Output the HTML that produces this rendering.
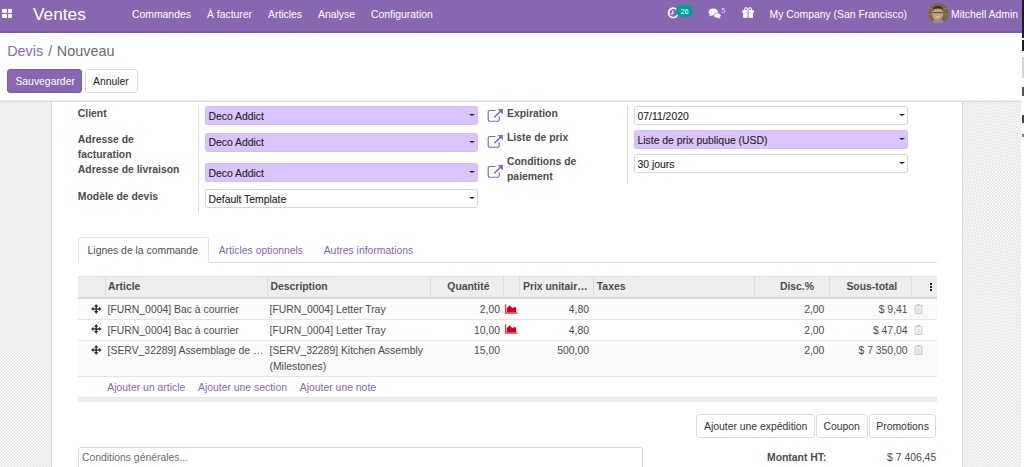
<!DOCTYPE html>
<html><head><meta charset="utf-8">
<style>
*{box-sizing:border-box;margin:0;padding:0}
html,body{width:1024px;height:467px;overflow:hidden;background:#fff;font-family:"Liberation Sans",sans-serif;font-size:10.4px;color:#4c4c4c}
.a{position:absolute;white-space:nowrap;line-height:12px}
.nav{position:absolute;left:0;top:0;width:1021.6px;height:33px;background:#8667b0;border-bottom:2px solid #7d5da9;z-index:2}
.nav .a{color:#fff}
.strip{position:absolute;left:1021px;top:0;width:3px;height:467px;background:#fff}
.cp{position:absolute;left:0;top:33px;width:1021px;height:69px;background:#fff;border-bottom:1px solid #dcdcdc;box-shadow:inset 0 -1px 0 #ececec}
.bg{position:absolute;left:0;top:102px;width:1021px;height:365px;background-color:#fafafa;background-image:radial-gradient(circle,#e4e4e4 0.6px,rgba(228,228,228,0) 1.25px),radial-gradient(circle,#e4e4e4 0.6px,rgba(228,228,228,0) 1.25px);background-size:3.2px 3.2px;background-position:0 0,1.6px 1.6px}
.sheet{position:absolute;left:51px;top:102px;width:912px;height:365px;background:#fff;border-left:1px solid #d8d5e6;border-right:1px solid #d8d5e6}
.lbl{font-weight:bold;color:#4c4c4c}
.fld{position:absolute;height:19px;border:1px solid #d6d6d6;border-radius:2.5px;background:#fff;color:#4c4c4c}
.fld.req{background:#dbc4fb;border-color:#d2bdf0}
.fld span{position:absolute;left:2.5px;top:3.6px;line-height:12px;color:#222;-webkit-text-stroke:0.1px #222}
.caret{position:absolute;right:2px;top:7px;width:0;height:0;border-left:3.1px solid transparent;border-right:3.1px solid transparent;border-top:2.8px solid #222}
.sep{position:absolute;width:1px;background:#dedede}
.btn{position:absolute;border:1px solid #dcdcdc;border-radius:3px;background:#fff;color:#333}
.btn span{position:absolute;line-height:12px;white-space:nowrap}
.purple{color:#8a63b5}

.tabbar{position:absolute;left:78px;top:262px;width:859px;height:1px;background:#dee2e6}
.tab{position:absolute;left:77.7px;top:236.8px;width:131px;height:26px;background:#fff;border:1px solid #dee2e6;border-bottom:none;border-radius:3px 3px 0 0}
.th{position:absolute;top:276px;height:23px;background:#eeeeee;border-top:1px solid #e2e2e2;border-bottom:2px solid #d8d8df}
.th i{position:absolute;top:0;width:1px;height:21px;background:#dcdcdc}
.hd{position:absolute;top:281.4px;font-weight:bold;line-height:12px;white-space:nowrap;color:#4c4c4c}
.row{position:absolute;left:78px;width:859px;border-bottom:1px solid #e4e4e8}
.c{position:absolute;line-height:12px;white-space:nowrap;color:#4c4c4c}
.r{text-align:right}
</style></head><body>

<!-- NAVBAR -->
<div class="nav">
  <div class="a" style="left:2px;top:9px;width:11px;height:9px">
    <div style="position:absolute;left:0;top:0.2px;width:4.5px;height:4.2px;background:#fff;border-radius:1px"></div>
    <div style="position:absolute;left:5.7px;top:0.2px;width:4.5px;height:4.2px;background:#fff;border-radius:1px"></div>
    <div style="position:absolute;left:0;top:5px;width:4.5px;height:4.2px;background:#fff;border-radius:1px"></div>
    <div style="position:absolute;left:5.7px;top:5px;width:4.5px;height:4.2px;background:#fff;border-radius:1px"></div>
  </div>
  <div class="a" style="left:33px;top:4px;font-size:17.3px;line-height:20px">Ventes</div>
  <div class="a" style="left:132px;top:9px">Commandes</div>
  <div class="a" style="left:207px;top:9px">À facturer</div>
  <div class="a" style="left:268px;top:9px">Articles</div>
  <div class="a" style="left:318px;top:9px">Analyse</div>
  <div class="a" style="left:371px;top:9px">Configuration</div>
  <!-- clock -->
  <svg class="a" style="left:667px;top:7px" width="13" height="13" viewBox="0 0 13 13"><circle cx="6.3" cy="5.9" r="4.7" fill="none" stroke="#fff" stroke-width="1.8"/><path d="M5.8 3.3V6.6H3.8" fill="none" stroke="#fff" stroke-width="1.1"/></svg>
  <div class="a" style="left:675.7px;top:5.2px;width:17.2px;height:11.8px;background:#00a09d;border-radius:6px;font-size:7.2px;line-height:13.5px;text-align:center;padding-left:0.5px;overflow:hidden">26</div>
  <!-- chat -->
  <svg class="a" style="left:707.5px;top:8px" width="14" height="11" viewBox="0 0 14 11"><ellipse cx="5.3" cy="3.9" rx="4.9" ry="3.5" fill="#fff"/><path d="M2 6L1.2 8.6L5 7z" fill="#fff"/><ellipse cx="9.3" cy="7.4" rx="3.6" ry="2.5" stroke="#8667b0" stroke-width="0.6" fill="#fff"/><path d="M11.5 9L12.8 10.6L9.5 9.8z" fill="#fff"/></svg>
  <div class="a" style="left:721.3px;top:6.4px;font-size:7.5px;line-height:9px;color:#ddd3ec">5</div>
  <!-- gift -->
  <svg class="a" style="left:742px;top:7px" width="13" height="12" viewBox="0 0 13 12"><rect x="0.4" y="3" width="11.4" height="3" fill="#fff"/><rect x="1.2" y="6" width="9.8" height="4.8" fill="#fff"/><circle cx="4.1" cy="2.2" r="1.4" fill="none" stroke="#fff" stroke-width="1.1"/><circle cx="8.1" cy="2.2" r="1.4" fill="none" stroke="#fff" stroke-width="1.1"/><rect x="5.6" y="3" width="1" height="8" fill="#8667b0"/></svg>
  <div class="a" style="left:769.5px;top:9px">My Company (San Francisco)</div>
  <svg class="a" style="left:928px;top:3px" width="21" height="21" viewBox="0 0 21 21"><defs><clipPath id="av"><circle cx="10.4" cy="10.4" r="10.3"/></clipPath></defs><g clip-path="url(#av)"><rect width="21" height="21" fill="#76693f"/><rect x="0" y="5" width="21" height="1" fill="#8c7c4c"/><rect x="0" y="11" width="21" height="1" fill="#8c7c4c"/><path d="M3 21 Q4 16 10 16.5 Q16 16 18 21z" fill="#8c9090"/><ellipse cx="9.6" cy="10.6" rx="5.6" ry="6.8" fill="#c49a80"/><path d="M4.6 8.5 Q4.5 3 10 3 Q15.5 3 15.2 8 L14 6.2 Q10 4.8 6 6.3z" fill="#3b2e26"/><path d="M4.6 9.6H14.8" stroke="#4a3f3a" stroke-width="0.9"/><ellipse cx="9.6" cy="14" rx="2" ry="0.8" fill="#e6cfc2"/></g></svg>
  <div class="a" style="left:951px;top:9px">Mitchell Admin</div>
</div>
<div class="a" style="left:1021.6px;top:32px;width:2.4px;height:435px;background:#fff"></div>
<div class="a" style="left:1019.5px;top:33px;width:1px;height:434px;background:#f0f0f0"></div>
<div class="a" style="left:1021.6px;top:0;width:2.4px;height:37.5px;background:#1c1c1c"></div>
<div class="a" style="left:1021.6px;top:39.5px;width:2.4px;height:11.5px;background:#1c1c1c"></div>
<div class="a" style="left:1021.6px;top:57px;width:2.4px;height:20.5px;background:#d4d4dc"></div>
<div class="a" style="left:1021.6px;top:87px;width:2.4px;height:9px;background:#555"></div>
<div class="a" style="left:1021.6px;top:115px;width:2.4px;height:7.5px;background:#444"></div>
<div class="a" style="left:1021.6px;top:133.7px;width:2.4px;height:3.8px;background:#8667b0"></div>
<div class="a" style="left:1020px;top:174px;width:1px;height:167px;background:#c8c8c8"></div>

<!-- CONTROL PANEL -->
<div class="cp"></div>
<div class="a purple" style="left:7.2px;top:42.5px;font-size:14.4px;line-height:16px">Devis</div><div class="a" style="left:48.3px;top:42.5px;font-size:14.4px;line-height:16px;color:#6b6b6b">/</div><div class="a" style="left:56.8px;top:42.5px;font-size:14.4px;line-height:16px;color:#6b6b6b">Nouveau</div>
<div class="btn" style="left:7px;top:69px;width:75px;height:24px;background:#8667b0;border-color:#7b5ca6"><span style="left:7.4px;top:6px;color:#fff">Sauvegarder</span></div>
<div class="btn" style="left:85px;top:69px;width:53px;height:24px"><span style="left:7px;top:6px;color:#222">Annuler</span></div>

<!-- BACKGROUND + SHEET -->
<div class="bg"></div>
<div class="sheet"></div>


<!-- FORM FIELDS -->
<div class="a lbl" style="left:77.8px;top:108.4px">Client</div>
<div class="a lbl" style="left:77.8px;top:131.5px;line-height:15px;white-space:normal;width:110px">Adresse de<br>facturation</div>
<div class="a lbl" style="left:77.8px;top:163.9px">Adresse de livraison</div>
<div class="a lbl" style="left:77.8px;top:190.6px">Modèle de devis</div>
<div class="sep" style="left:198px;top:105.5px;height:107px"></div>
<div class="fld req" style="left:205px;top:106px;width:273px"><span>Deco Addict</span><i class="caret"></i></div>
<div class="fld req" style="left:205px;top:132.5px;width:273px"><span>Deco Addict</span><i class="caret"></i></div>
<div class="fld req" style="left:205px;top:163px;width:273px"><span>Deco Addict</span><i class="caret"></i></div>
<div class="fld" style="left:205px;top:189.3px;width:273px"><span>Default Template</span><i class="caret"></i></div>
<svg class="a ext" style="left:487px;top:108.0px" width="17" height="15" viewBox="0 0 17 15"><path d="M8.6 2.5H2.8Q1.2 2.5 1.2 4.1V11.6Q1.2 13.2 2.8 13.2H10.6Q12.2 13.2 12.2 11.6V8.2" fill="none" stroke="#8a63b5" stroke-width="1.15"/><path d="M7.4 9.2L14.2 2.4" stroke="#8a63b5" stroke-width="1.5"/><path d="M10.6 0.9H15.9V6.2z" fill="#8a63b5"/></svg>
<svg class="a ext" style="left:487px;top:133.5px" width="17" height="15" viewBox="0 0 17 15"><path d="M8.6 2.5H2.8Q1.2 2.5 1.2 4.1V11.6Q1.2 13.2 2.8 13.2H10.6Q12.2 13.2 12.2 11.6V8.2" fill="none" stroke="#8a63b5" stroke-width="1.15"/><path d="M7.4 9.2L14.2 2.4" stroke="#8a63b5" stroke-width="1.5"/><path d="M10.6 0.9H15.9V6.2z" fill="#8a63b5"/></svg>
<svg class="a ext" style="left:487px;top:163.5px" width="17" height="15" viewBox="0 0 17 15"><path d="M8.6 2.5H2.8Q1.2 2.5 1.2 4.1V11.6Q1.2 13.2 2.8 13.2H10.6Q12.2 13.2 12.2 11.6V8.2" fill="none" stroke="#8a63b5" stroke-width="1.15"/><path d="M7.4 9.2L14.2 2.4" stroke="#8a63b5" stroke-width="1.5"/><path d="M10.6 0.9H15.9V6.2z" fill="#8a63b5"/></svg>
<div class="a lbl" style="left:507px;top:108.4px">Expiration</div>
<div class="a lbl" style="left:507px;top:132.4px">Liste de prix</div>
<div class="a lbl" style="left:507px;top:153.9px;line-height:15px">Conditions de<br>paiement</div>
<div class="sep" style="left:627px;top:105.5px;height:78px"></div>
<div class="fld" style="left:634px;top:106px;width:274px"><span>07/11/2020</span><i class="caret"></i></div>
<div class="fld req" style="left:634px;top:130px;width:274px"><span>Liste de prix publique (USD)</span><i class="caret"></i></div>
<div class="fld" style="left:634px;top:154.3px;width:274px"><span>30 jours</span><i class="caret"></i></div>


<!-- TABS -->
<div class="tabbar"></div>
<div class="tab"></div>
<div class="a" style="left:87.6px;top:245px;color:#4c4c4c">Lignes de la commande</div>
<div class="a purple" style="left:218.7px;top:245px">Articles optionnels</div>
<div class="a purple" style="left:323.7px;top:245px">Autres informations</div>

<!-- TABLE -->
<div class="th" style="left:78px;width:859px">
 <i style="left:27px"></i><i style="left:189px"></i><i style="left:352px"></i><i style="left:425px"></i><i style="left:441px"></i><i style="left:515px"></i><i style="left:676px"></i><i style="left:751px"></i><i style="left:833px"></i>
</div>
<div class="hd" style="left:108px">Article</div>
<div class="hd" style="left:270.5px">Description</div>
<div class="hd" style="left:447.3px">Quantité</div>
<div class="hd" style="left:523px">Prix unitair…</div>
<div class="hd" style="left:596.8px">Taxes</div>
<div class="hd" style="left:764px;width:50px;text-align:right">Disc.%</div>
<div class="hd" style="left:846.4px">Sous-total</div>
<div class="a" style="left:930px;top:283px;width:3px;height:9px">
  <div style="position:absolute;left:0;top:0;width:2.2px;height:2.2px;background:#222"></div>
  <div style="position:absolute;left:0;top:3px;width:2.2px;height:2.2px;background:#222"></div>
  <div style="position:absolute;left:0;top:6px;width:2.2px;height:2.2px;background:#222"></div>
</div>

<div class="row" style="top:299px;height:21px;background:#fafafa"></div>
<div class="row" style="top:320px;height:21px;background:#fff"></div>
<div class="row" style="top:341px;height:36px;background:#fafafa"></div>
<div class="row" style="top:377px;height:20px;background:#fff;border-bottom:none"></div>
<div class="a" style="left:78px;top:397px;width:859px;height:5px;background:#eeeeee;border-top:1px solid #e4e4e8"></div>

<svg class="a" style="left:91px;top:303.5px" width="11" height="10" viewBox="0 0 11 10"><path d="M5.2 0L7.4 2.8H5.9V4.25H8V2.8L10.6 4.95L8 7.1V5.65H5.9V7.1H7.4L5.2 9.9L3 7.1H4.5V5.65H2.5V7.1L0 4.95L2.5 2.8V4.25H4.5V2.8H3Z" fill="#333"/></svg><div class="c" style="left:107.6px;top:304.4px">[FURN_0004] Bac à courrier</div><div class="c" style="left:269.5px;top:304.4px">[FURN_0004] Letter Tray</div><div class="c r" style="left:440px;width:60px;top:304.4px">2,00</div><svg class="a" style="left:505px;top:303.7px" width="13" height="10" viewBox="0 0 13 10"><path d="M0.6 0.3V9.1H12.5" fill="none" stroke="#dd3550" stroke-width="1.2"/><path d="M1.8 8.6V4.3L4.5 1.2L7.4 4.3L9.9 2.7L11.2 3.9V8.6z" fill="#d5001c"/></svg><div class="c r" style="left:529px;width:60px;top:304.4px">4,80</div><div class="c r" style="left:764px;width:60.4px;top:304.4px">2,00</div><div class="c r" style="left:837px;width:70.6px;top:304.4px">$ 9,41</div><svg class="a" style="left:913.5px;top:304.0px" width="9" height="10" viewBox="0 0 9 10"><path d="M3 1.3V0.5H6V1.3M0.3 1.8H8.7M1.2 2.4V9.4H7.8V2.4" fill="none" stroke="#c2c4d0" stroke-width="1"/><path d="M3.1 3.6V8.3M4.5 3.6V8.3M5.9 3.6V8.3" stroke="#cfd0da" stroke-width="0.8"/></svg>
<svg class="a" style="left:91px;top:324.0px" width="11" height="10" viewBox="0 0 11 10"><path d="M5.2 0L7.4 2.8H5.9V4.25H8V2.8L10.6 4.95L8 7.1V5.65H5.9V7.1H7.4L5.2 9.9L3 7.1H4.5V5.65H2.5V7.1L0 4.95L2.5 2.8V4.25H4.5V2.8H3Z" fill="#333"/></svg><div class="c" style="left:107.6px;top:324.9px">[FURN_0004] Bac à courrier</div><div class="c" style="left:269.5px;top:324.9px">[FURN_0004] Letter Tray</div><div class="c r" style="left:440px;width:60px;top:324.9px">10,00</div><svg class="a" style="left:505px;top:324.2px" width="13" height="10" viewBox="0 0 13 10"><path d="M0.6 0.3V9.1H12.5" fill="none" stroke="#dd3550" stroke-width="1.2"/><path d="M1.8 8.6V4.3L4.5 1.2L7.4 4.3L9.9 2.7L11.2 3.9V8.6z" fill="#d5001c"/></svg><div class="c r" style="left:529px;width:60px;top:324.9px">4,80</div><div class="c r" style="left:764px;width:60.4px;top:324.9px">2,00</div><div class="c r" style="left:837px;width:70.6px;top:324.9px">$ 47,04</div><svg class="a" style="left:913.5px;top:324.5px" width="9" height="10" viewBox="0 0 9 10"><path d="M3 1.3V0.5H6V1.3M0.3 1.8H8.7M1.2 2.4V9.4H7.8V2.4" fill="none" stroke="#c2c4d0" stroke-width="1"/><path d="M3.1 3.6V8.3M4.5 3.6V8.3M5.9 3.6V8.3" stroke="#cfd0da" stroke-width="0.8"/></svg>
<svg class="a" style="left:91px;top:344.5px" width="11" height="10" viewBox="0 0 11 10"><path d="M5.2 0L7.4 2.8H5.9V4.25H8V2.8L10.6 4.95L8 7.1V5.65H5.9V7.1H7.4L5.2 9.9L3 7.1H4.5V5.65H2.5V7.1L0 4.95L2.5 2.8V4.25H4.5V2.8H3Z" fill="#333"/></svg><div class="c" style="left:107.6px;top:345.4px">[SERV_32289] Assemblage de …</div><div class="c" style="left:269.5px;top:345.4px">[SERV_32289] Kitchen Assembly</div><div class="c" style="left:269.5px;top:361.4px">(Milestones)</div><div class="c r" style="left:440px;width:60px;top:345.4px">15,00</div><div class="c r" style="left:529px;width:60px;top:345.4px">500,00</div><div class="c r" style="left:764px;width:60.4px;top:345.4px">2,00</div><div class="c r" style="left:837px;width:70.6px;top:345.4px">$ 7 350,00</div><svg class="a" style="left:913.5px;top:345.0px" width="9" height="10" viewBox="0 0 9 10"><path d="M3 1.3V0.5H6V1.3M0.3 1.8H8.7M1.2 2.4V9.4H7.8V2.4" fill="none" stroke="#c2c4d0" stroke-width="1"/><path d="M3.1 3.6V8.3M4.5 3.6V8.3M5.9 3.6V8.3" stroke="#cfd0da" stroke-width="0.8"/></svg>
<div class="a purple" style="left:107.3px;top:381.9px">Ajouter un article</div><div class="a purple" style="left:198px;top:381.9px">Ajouter une section</div><div class="a purple" style="left:299.8px;top:381.9px">Ajouter une note</div>

<!-- BOTTOM -->
<div class="btn" style="left:696.4px;top:414px;width:118.4px;height:24px"><span style="left:6.6px;top:6px">Ajouter une expédition</span></div>
<div class="btn" style="left:815.9px;top:414px;width:51.7px;height:24px"><span style="left:6.6px;top:6px">Coupon</span></div>
<div class="btn" style="left:868.7px;top:414px;width:67.8px;height:24px"><span style="left:6.6px;top:6px">Promotions</span></div>
<div class="a" style="left:78.3px;top:447px;width:564.5px;height:30px;border:1px solid #d6d6d6;border-radius:3px;background:#fff"></div>
<div class="a" style="left:81.9px;top:452.4px;color:#6c6c6c">Conditions générales...</div>
<div class="a lbl" style="left:767px;top:452.1px">Montant HT:</div>
<div class="a r" style="left:836px;width:100.2px;top:452.1px">$ 7 406,45</div>

</body></html>
